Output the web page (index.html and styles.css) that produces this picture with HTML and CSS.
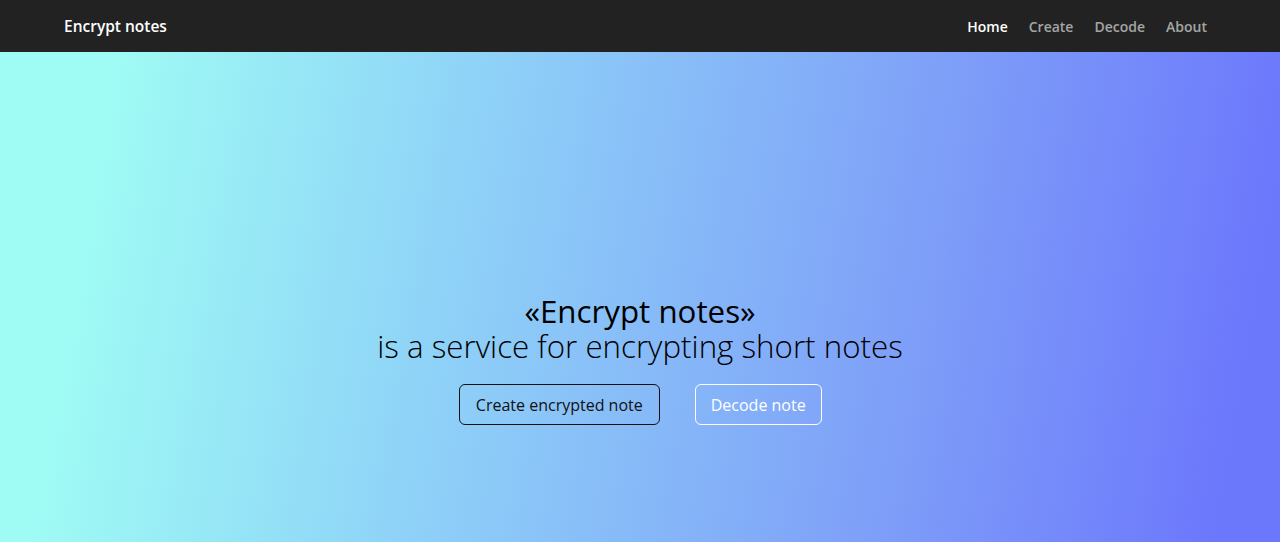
FILE: index.html
```html
<!DOCTYPE html>
<html lang="en">
<head>
<meta charset="utf-8">
<title>Encrypt notes</title>
<link rel="stylesheet" href="styles.css">
</head>
<body>
<header class="navbar">
  <a class="brand" href="#">Encrypt notes</a>
  <nav class="nav">
    <a class="nav-link active" href="#">Home</a>
    <a class="nav-link" href="#">Create</a>
    <a class="nav-link" href="#">Decode</a>
    <a class="nav-link" href="#">About</a>
  </nav>
</header>
<main class="hero">
  <h1 class="title">«Encrypt notes»</h1>
  <p class="subtitle">is a service for encrypting short notes</p>
  <div class="actions">
    <a class="btn btn-dark" href="#">Create encrypted note</a>
    <a class="btn btn-light" href="#">Decode note</a>
  </div>
</main>
</body>
</html>
```
FILE: styles.css
```css
* { box-sizing: border-box; }
html, body { margin: 0; padding: 0; height: 100%; }
body {
  font-family: "Open Sans", "Liberation Sans", sans-serif;
  overflow: hidden;
}
a { text-decoration: none; }
.navbar {
  height: 52px;
  background: #222222;
  display: flex;
  align-items: center;
  justify-content: space-between;
  padding: 0 65px 0 64px;
}
.brand {
  color: #ffffff;
  font-size: 15.5px;
  font-weight: 600;
}
.nav { display: flex; }
.nav-link {
  color: rgba(255,255,255,0.6);
  font-size: 14px;
  font-weight: 600;
  padding: 0 10.5px;
}
.nav-link:last-child { padding-right: 8px; }
.nav-link.active { color: #ffffff; }
.hero {
  height: 490px;
  background: linear-gradient(100deg, #9ffcf4 8%, #8fd3f8 35%, #7e9ff8 70%, #6c78fc 95%);
  display: flex;
  flex-direction: column;
  align-items: center;
  padding-top: 242px;
  color: #000;
}
.title {
  margin: 0;
  font-size: 31.3px;
  font-weight: 400;
  line-height: 35px;
}
.subtitle {
  margin: 0;
  font-size: 31.3px;
  font-weight: 300;
  line-height: 35px;
}
.actions {
  display: flex;
  gap: 36px;
  margin-top: 20px;
}
.btn {
  display: inline-flex;
  align-items: center;
  height: 41px;
  padding: 0 16px 0 15.5px;
  border-radius: 6px;
  font-size: 16px;
  font-weight: 400;
  border: 1px solid;
}
.btn-dark { color: #111; border-color: #111; margin-left: 1px; }
.btn-light { color: #fff; border-color: #fff; padding: 0 15px; margin-left: -1px; }
```
